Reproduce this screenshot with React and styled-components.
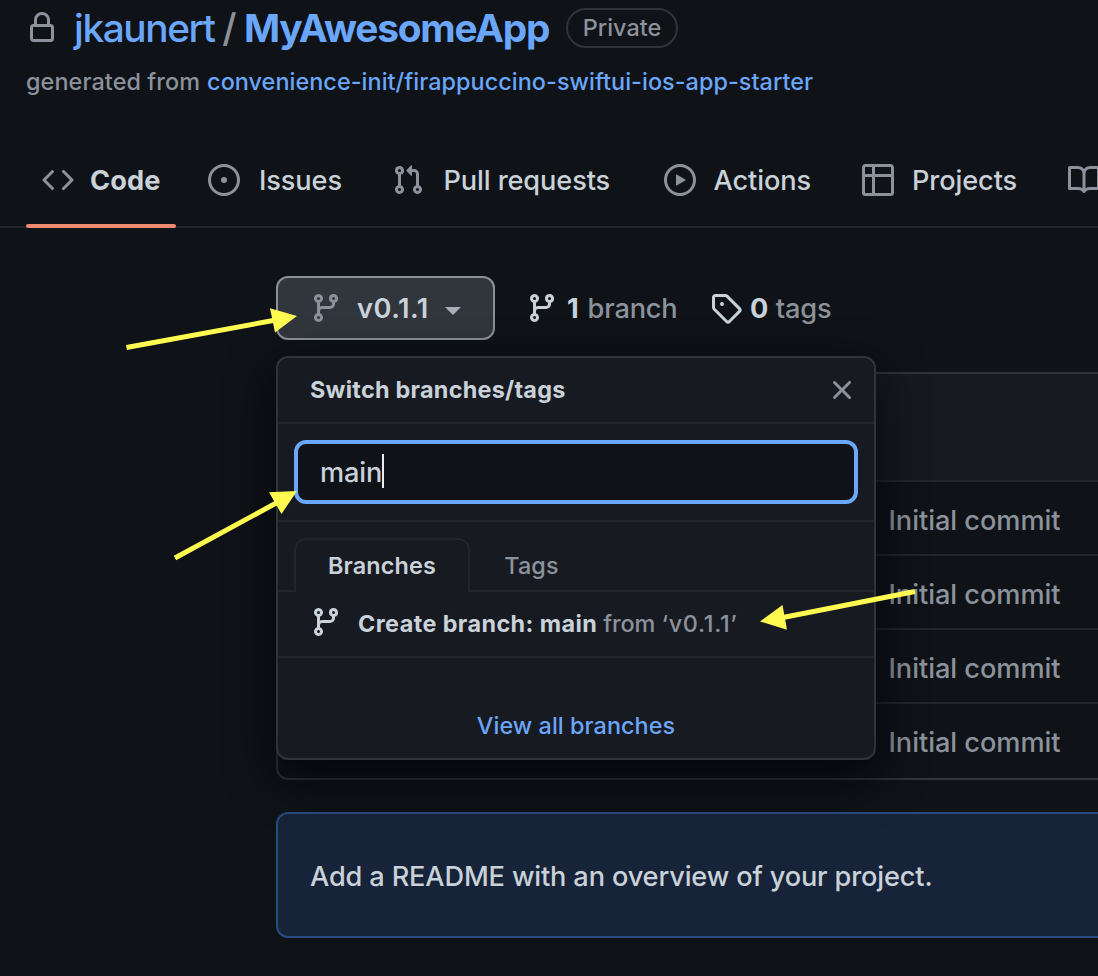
import React from "react";
import styled, { createGlobalStyle } from "styled-components";

const c = {
  bg: "#0f1217",
  panel: "#171a21",
  line: "#22262c",
  border: "#303338",
  text: "#c9d1d9",
  muted: "#8b929b",
  link: "#6aa6fa",
  accent: "#ec8a70",
};

const Global = createGlobalStyle`
  * { box-sizing: border-box; }
  body { margin: 0; background: ${c.bg}; }
`;

const Page = styled.div`
  position: relative;
  width: 1098px;
  height: 976px;
  overflow: hidden;
  background: ${c.bg};
  color: ${c.text};
  font-family: Inter, "Liberation Sans", sans-serif;
  font-size: 27.2px;
  white-space: nowrap;
`;

const Text = styled.span`
  font-size: ${(p) => p.$size || 27.2}px;
  font-weight: ${(p) => p.$weight || 460};
  letter-spacing: ${(p) => p.$track ?? -0.12}px;
  color: ${(p) => c[p.$tone || "text"]};
`;

const Svg = styled.svg`
  flex: none;
  width: 32px;
  height: 32px;
  fill: ${(p) => c[p.$tone || "muted"]};
`;

const paths = {
  lock: "M4 4v2h-.25A1.75 1.75 0 002 7.75v5.5c0 .966.784 1.75 1.75 1.75h8.5A1.75 1.75 0 0014 13.25v-5.5A1.75 1.75 0 0012.25 6H12V4a4 4 0 10-8 0zm6.5 2V4a2.5 2.5 0 00-5 0v2h5zM12 7.5h.25a.25.25 0 01.25.25v5.5a.25.25 0 01-.25.25h-8.5a.25.25 0 01-.25-.25v-5.5a.25.25 0 01.25-.25H12z",
  code: "M4.72 3.22a.75.75 0 011.06 1.06L2.06 8l3.72 3.72a.75.75 0 11-1.06 1.06L.47 8.53a.75.75 0 010-1.06l4.25-4.25zm6.56 0a.75.75 0 10-1.06 1.06L13.94 8l-3.72 3.72a.75.75 0 101.06 1.06l4.25-4.25a.75.75 0 000-1.06l-4.25-4.25z",
  issue: "M8 9.5a1.5 1.5 0 100-3 1.5 1.5 0 000 3zM8 0a8 8 0 100 16A8 8 0 008 0zM1.5 8a6.5 6.5 0 1113 0 6.5 6.5 0 01-13 0z",
  pull: "M7.177 3.073L9.573.677A.25.25 0 0110 .854v4.792a.25.25 0 01-.427.177L7.177 3.427a.25.25 0 010-.354zM3.75 2.5a.75.75 0 100 1.5.75.75 0 000-1.5zm-2.25.75a2.25 2.25 0 113 2.122v5.256a2.251 2.251 0 11-1.5 0V5.372A2.25 2.25 0 011.5 3.25zM11 2.5h-1V4h1a1 1 0 011 1v5.628a2.251 2.251 0 101.5 0V5A2.5 2.5 0 0011 2.5zm1 10.25a.75.75 0 111.5 0 .75.75 0 01-1.5 0zM3.75 12a.75.75 0 100 1.5.75.75 0 000-1.5z",
  play: "M1.5 8a6.5 6.5 0 1113 0 6.5 6.5 0 01-13 0zM8 0a8 8 0 100 16A8 8 0 008 0zM6.379 5.227A.25.25 0 006 5.442v5.117a.25.25 0 00.379.214l4.264-2.559a.25.25 0 000-.428L6.379 5.227z",
  table: "M0 1.75C0 .784.784 0 1.75 0h12.5C15.216 0 16 .784 16 1.75v12.5A1.75 1.75 0 0114.25 16H1.75A1.75 1.75 0 010 14.25V1.75zM1.5 6.5v7.75c0 .138.112.25.25.25H5v-8H1.5zM5 5H1.5V1.75a.25.25 0 01.25-.25H5V5zm1.5 1.5v8h7.75a.25.25 0 00.25-.25V6.5h-8zm8-1.5h-8V1.5h7.75a.25.25 0 01.25.25V5z",
  book: "M0 1.75A.75.75 0 01.75 1h4.253c1.227 0 2.317.59 3 1.501A3.744 3.744 0 0111.006 1h4.245a.75.75 0 01.75.75v10.5a.75.75 0 01-.75.75h-4.507a2.25 2.25 0 00-1.591.659l-.622.621a.75.75 0 01-1.06 0l-.622-.621A2.25 2.25 0 005.258 13H.75a.75.75 0 01-.75-.75V1.75zm8.755 3a2.25 2.25 0 012.25-2.25H14.5v9h-3.757c-.71 0-1.4.201-1.992.572l.004-7.322zm-1.504 7.324l.004-5.073-.002-2.253A2.25 2.25 0 005.003 2.5H1.5v9h3.757a3.75 3.75 0 011.994.574z",
  branch: "M11.75 2.5a.75.75 0 100 1.5.75.75 0 000-1.5zm-2.25.75a2.25 2.25 0 113 2.122V6A2.5 2.5 0 0110 8.5H6a1 1 0 00-1 1v1.128a2.251 2.251 0 11-1.5 0V5.372a2.25 2.25 0 111.5 0v1.836A2.492 2.492 0 016 7h4a1 1 0 001-1v-.628A2.25 2.25 0 019.5 3.25zM4.25 12a.75.75 0 100 1.5.75.75 0 000-1.5zM3.5 3.25a.75.75 0 111.5 0 .75.75 0 01-1.5 0z",
  tag: "M2.5 7.775V2.75a.25.25 0 01.25-.25h5.025a.25.25 0 01.177.073l6.25 6.25a.25.25 0 010 .354l-5.025 5.025a.25.25 0 01-.354 0l-6.25-6.25a.25.25 0 01-.073-.177zm-1.5 0V2.75C1 1.784 1.784 1 2.75 1h5.025c.464 0 .91.184 1.238.513l6.25 6.25a1.75 1.75 0 010 2.474l-5.026 5.026a1.75 1.75 0 01-2.474 0l-6.25-6.25A1.75 1.75 0 011 7.775zM6 5a1 1 0 100 2 1 1 0 000-2z",
  close: "M3.72 3.72a.75.75 0 011.06 0L8 6.94l3.22-3.22a.75.75 0 111.06 1.06L9.06 8l3.22 3.22a.75.75 0 11-1.06 1.06L8 9.06l-3.22 3.22a.75.75 0 01-1.06-1.06L6.94 8 3.72 4.78a.75.75 0 010-1.06z",
};

const Icon = ({ name, tone }) => (
  <Svg viewBox="0 0 16 16" $tone={tone} aria-hidden="true">
    <path fillRule="evenodd" d={paths[name]} />
  </Svg>
);

const RepoHeader = styled.header`
  height: 148px;
  padding: 0 26px;
`;

const TitleRow = styled.div`
  display: flex;
  align-items: center;
  height: 56px;
`;

const Title = styled.h1`
  display: flex;
  width: 492px;
  margin: 0 0 0 16px;
  line-height: 56px;
  font-size: 38.8px;
  font-weight: 460;
`;

const Slash = styled.span`
  margin: 0 7.5px;
  color: ${c.muted};
`;

const Pill = styled.span`
  display: flex;
  flex: none;
  align-items: center;
  justify-content: center;
  width: 112px;
  height: 40px;
  padding-bottom: 2px;
  border: 2px solid ${c.border};
  border-radius: 20px;
`;

const Generated = styled.div`
  display: flex;
  gap: 7px;
  height: 32px;
  margin-top: 10px;
  line-height: 32px;
`;

const Nav = styled.nav`
  display: flex;
  gap: 16px;
  height: 80px;
  padding-left: 26px;
  border-bottom: 2px solid ${c.line};
`;

const NavTab = styled.a`
  position: relative;
  flex: none;
  display: flex;
  align-items: center;
  gap: 16px;
  height: 64px;
  padding: 0 16px;

  ${(p) => p.$active && `&::after {
    content: "";
    position: absolute;
    left: 0;
    right: 0;
    bottom: -16px;
    height: 4px;
    border-radius: 2px;
    background: ${c.accent};
  }`}
`;

const NavLabel = styled(Text)`
  width: ${(p) => p.$w}px;
  padding-left: ${(p) => p.$inset || 0}px;
`;

const Main = styled.main`
  position: relative;
  width: 1000px;
  margin: 48px 0 0 276px;
`;

const RefBar = styled.div`
  display: flex;
  align-items: center;
  height: 64px;
`;

const RefButton = styled.button`
  display: flex;
  align-items: center;
  width: 219px;
  height: 64px;
  margin-right: 31px;
  padding: 0 32px;
  border: 2px solid #8a9099;
  border-radius: 12px;
  background: #31353c;
  font-family: inherit;
  text-align: left;
`;

const ButtonLabel = styled(Text)`
  width: 72px;
  margin: 0 16px 0 15px;
`;

const Triangle = styled.span`
  flex: none;
  margin-top: 5px;
  border: 8px solid transparent;
  border-top-color: #a9b0b8;
  border-bottom: 0;
`;

const Count = styled.span`
  display: flex;
  align-items: center;
  width: ${(p) => p.$w}px;
`;

const CountText = styled.span`
  display: flex;
  gap: ${(p) => p.$gap}px;
  margin-left: ${(p) => p.$left}px;
`;

const Files = styled.section`
  height: 408px;
  margin-top: 32px;
  border: 2px solid ${c.border};
  border-radius: 12px;
  overflow: hidden;
`;

const FilesHeader = styled.div`
  height: 106px;
  background: #161a20;
`;

const FileRow = styled.div`
  display: flex;
  align-items: center;
  height: 74px;
  padding: 4px 0 0 610.5px;
  border-top: 2px solid ${c.line};
`;

const Banner = styled.section`
  display: flex;
  align-items: center;
  height: 126px;
  margin-top: 32px;
  padding: 2px 0 0 32px;
  border: 2px solid #294b82;
  border-radius: 12px;
  background: #172338;
`;

const Popover = styled.div`
  position: absolute;
  top: 80px;
  left: 0;
  width: 600px;
  height: 404px;
  border: 2px solid ${c.border};
  border-radius: 12px;
  background: ${c.panel};
  box-shadow: 0 16px 48px rgba(1, 4, 9, 0.85);
`;

const PopHeader = styled.div`
  display: flex;
  align-items: center;
  justify-content: space-between;
  height: 66px;
  padding: 0 16px 0 32px;
  border-bottom: 2px solid ${c.line};
  ${Text} { margin-top: -2px; }
`;

const FilterArea = styled.div`
  height: 98px;
  padding: 16px;
  border-bottom: 2px solid ${c.line};
`;

const Field = styled.div`
  display: flex;
  align-items: center;
  height: 64px;
  padding-left: 22px;
  border: 4px solid ${c.link};
  border-radius: 12px;
  background: ${c.bg};
`;

const Cursor = styled.span`
  width: 2px;
  height: 34px;
  margin-top: -2px;
  background: #e8edf2;
`;

const Tabs = styled.div`
  display: flex;
  height: 70px;
  padding: 16px 16px 0;
  border-bottom: 2px solid ${c.line};
`;

const Tab = styled.div`
  display: flex;
  align-items: center;
  justify-content: center;
  height: 54px;
  width: ${(p) => p.$w}px;
  padding-bottom: 2px;
  border: 2px solid ${(p) => (p.$active ? c.line : "transparent")};
  border-bottom: 0;
  border-radius: 12px 12px 0 0;
  background: ${(p) => (p.$active ? c.panel : "transparent")};
`;

const CreateRow = styled.div`
  display: flex;
  align-items: center;
  height: 66px;
  padding: 0 32px 2px;
  border-bottom: 2px solid ${c.line};
  ${Svg} { margin: -2px 16px 0 0; }
`;

const Footer = styled.div`
  display: flex;
  align-items: flex-end;
  justify-content: center;
  height: 82px;
`;

const Arrows = styled.svg`
  position: absolute;
  inset: 0;
  fill: #fffa50;
  stroke: #fffa50;
  pointer-events: none;
  path { stroke: none; }
`;

const nav = [
  { icon: "code", label: "Code", w: 70, active: true },
  { icon: "issue", label: "Issues", w: 88, inset: 3 },
  { icon: "pull", label: "Pull requests", w: 176, inset: 3.5 },
  { icon: "play", label: "Actions", w: 102, inset: 1.5 },
  { icon: "table", label: "Projects", w: 110, inset: 2 },
  { icon: "book" },
];

export default function App() {
  return (
    <Page>
      <Global />
      <RepoHeader>
        <TitleRow>
          <Icon name="lock" />
          <Title>
            <Text $size={38.8} $track={-1.4} $tone="link">jkaunert</Text>
            <Slash>/</Slash>
            <Text $size={38.8} $weight={700} $track={-1.2} $tone="link">MyAwesomeApp</Text>
          </Title>
          <Pill><Text $size={23.4} $weight={520} $track={0} $tone="muted">Private</Text></Pill>
        </TitleRow>
        <Generated>
          <Text $size={23.4} $track={0.09} $tone="muted">generated from</Text>
          <Text $size={23.4} $track={0.05} $tone="link">convenience-init/firappuccino-swiftui-ios-app-starter</Text>
        </Generated>
      </RepoHeader>

      <Nav>
        {nav.map((n) => (
          <NavTab key={n.icon} $active={n.active}>
            <Icon name={n.icon} />
            {n.label && (
              <NavLabel
                $w={n.w}
                $inset={n.inset}
                $weight={n.active ? 680 : 460}
                $track={n.active ? 0.1 : -0.12}
              >
                {n.label}
              </NavLabel>
            )}
          </NavTab>
        ))}
      </Nav>

      <Main>
        <RefBar>
          <RefButton>
            <Icon name="branch" />
            <ButtonLabel $weight={570} $track={0.5}>v0.1.1</ButtonLabel>
            <Triangle />
          </RefButton>
          <Count $w={184}>
            <Icon name="branch" tone="text" />
            <CountText $left={9} $gap={9}>
              <Text $weight={700}>1</Text>
              <Text $track={-0.2} $tone="muted">branch</Text>
            </CountText>
          </Count>
          <Count $w={140}>
            <Icon name="tag" tone="text" />
            <CountText $left={8} $gap={7.5}>
              <Text $weight={700}>0</Text>
              <Text $tone="muted">tags</Text>
            </CountText>
          </Count>
        </RefBar>

        <Files>
          <FilesHeader />
          {[1, 2, 3, 4].map((n) => (
            <FileRow key={n}><Text $track={-0.05} $tone="muted">Initial commit</Text></FileRow>
          ))}
        </Files>

        <Banner><Text $track={-0.16}>Add a README with an overview of your project.</Text></Banner>

        <Popover>
          <PopHeader>
            <Text $size={23.4} $weight={660} $track={0.26}>Switch branches/tags</Text>
            <Icon name="close" />
          </PopHeader>
          <FilterArea>
            <Field><Text>main</Text><Cursor /></Field>
          </FilterArea>
          <Tabs>
            <Tab $active $w={176}><Text $size={23.4} $weight={570} $track={0.15}>Branches</Text></Tab>
            <Tab $w={123}><Text $size={23.4} $track={0.2} $tone="muted">Tags</Text></Tab>
          </Tabs>
          <CreateRow>
            <Icon name="branch" tone="text" />
            <Text $size={23.4} $weight={660} $track={0.41}>Create branch: main&nbsp;</Text>
            <Text $size={23.4} $track={-0.05} $tone="muted">from&nbsp;</Text>
            <Text $size={23.4} $track={0.7} $tone="muted">‘v0.1.1’</Text>
          </CreateRow>
          <Footer><Text $size={23.4} $track={0.05} $tone="link">View all branches</Text></Footer>
        </Popover>
      </Main>

      <Arrows width="1098" height="976" viewBox="0 0 1098 976">
        <g strokeWidth="5">
          <line x1="126.5" y1="347.5" x2="276" y2="320" />
          <line x1="175" y1="558" x2="279" y2="501.5" />
          <line x1="915" y1="591.5" x2="783" y2="617.5" />
        </g>
        <path d="M297 316L270 308.3L275 332.5zM297 491L269 492.2L281.5 514zM760 621.5L782.5 605L787 629.7z" />
      </Arrows>
    </Page>
  );
}
